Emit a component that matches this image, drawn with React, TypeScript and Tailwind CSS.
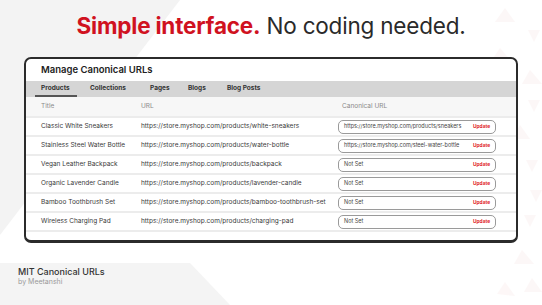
import React from 'react';

const rows = [
  { title: 'Classic White Sneakers', url: 'https://store.myshop.com/products/white-sneakers', canonical: 'https://store.myshop.com/products/sneakers' },
  { title: 'Stainless Steel Water Bottle', url: 'https://store.myshop.com/products/water-bottle', canonical: 'https://store.myshop.com/steel-water-bottle' },
  { title: 'Vegan Leather Backpack', url: 'https://store.myshop.com/products/backpack', canonical: '' },
  { title: 'Organic Lavender Candle', url: 'https://store.myshop.com/products/lavender-candle', canonical: '' },
  { title: 'Bamboo Toothbrush Set', url: 'https://store.myshop.com/products/bamboo-toothbrush-set', canonical: '' },
  { title: 'Wireless Charging Pad', url: 'https://store.myshop.com/products/charging-pad', canonical: '' },
];

const tabs = [
  { label: 'Products', w: 'w-[49px]', active: true },
  { label: 'Collections', w: 'w-[60px]', active: false },
  { label: 'Pages', w: 'w-[38px]', active: false },
  { label: 'Blogs', w: 'w-[39px]', active: false },
  { label: 'Blog Posts', w: 'w-[60px]', active: false },
];

const Backdrop = () => (
  <svg className="absolute inset-0" width="542" height="305" viewBox="0 0 542 305">
    <rect width="542" height="305" fill="#ffffff" />
    <polygon points="0,0 180,0 0,235" fill="#f3f3f3" />
    <polygon points="0,263 190,263 230,305 0,305" fill="#f4f4f4" />
    {/* faint triangle pattern on the right */}
    <g fill="#eec4c4" opacity="0.13">
      <polygon points="505,8 515,22 495,22" />
      <polygon points="528,30 540,30 534,42" />
      <polygon points="500,48 512,62 492,60" />
      <polygon points="530,70 542,84 522,84" />
      <polygon points="522,250 534,264 514,264" />
      <polygon points="532,278 542,292 524,292" />
      <polygon points="505,282 515,296 497,294" />
      <polygon points="528,100 540,100 534,112" />
      <polygon points="526,160 538,160 532,172" />
      <polygon points="524,215 536,215 530,227" />
      <polygon points="520,125 530,139 512,139" />
      <polygon points="530,190 542,190 536,202" />
    </g>
  </svg>
);

export default function App() {
  return (
    <div className="relative w-[542px] h-[305px] overflow-hidden font-['Inter',sans-serif]">
      <Backdrop />
      <div className="relative flex flex-col">
        <h1 className="h-[57px] pt-[11px] text-center text-[22.5px] leading-[30px] tracking-[-0.2px] text-[#2a2a2a]">
          <span className="font-bold text-[#d0121f]">Simple interface.</span>{' '}
          <span className="font-normal">No coding needed.</span>
        </h1>

        <div className="mx-[24px] h-[186px] rounded-[7px] border-2 border-b-[3px] border-[#2b2b2b] bg-white overflow-hidden flex flex-col">
          <div className="h-[22px] pl-[15px] flex items-center text-[9.5px] font-semibold text-[#222]">
            Manage Canonical URLs
          </div>

          <div className="h-[16px] bg-[#d5d5d5] pl-[9px] flex">
            {tabs.map((t) => (
              <div key={t.label} className={`${t.w} relative pl-[6px] flex items-center text-[6.5px] font-bold text-[#333]`}>
                {t.label}
                {t.active && <div className="absolute bottom-0 left-0 w-[42px] h-[2px] bg-[#555]" />}
              </div>
            ))}
          </div>

          <div className="h-[19px] bg-[#f7f7f7] pl-[15px] flex items-center text-[6.5px] text-[#8a8a8a]">
            <div className="w-[100px]">Title</div>
            <div className="w-[197px]">URL</div>
            <div className="pl-[4px]">Canonical URL</div>
          </div>

          {rows.map((r) => (
            <div key={r.title} className="h-[19px] border-t-2 border-[#ececec] pl-[15px] flex items-center text-[6.5px] text-[#3a3a3a]">
              <div className="w-[100px]">{r.title}</div>
              <div className="w-[197px]">{r.url}</div>
              <div className="w-[158px] h-[14px] rounded-[5px] border border-[#9a9a9a] flex items-center justify-between pl-[5px] pr-[5px]">
                <span className="text-[5.5px] text-[#444]">{r.canonical || 'Not Set'}</span>
                <span className="text-[4.8px] font-bold text-[#e0232b]">Update</span>
              </div>
            </div>
          ))}
          <div className="border-t-2 border-[#ececec]" />
        </div>

        <div className="pt-[24px] pl-[18px] flex flex-col">
          <span className="text-[9px] leading-[10px] font-medium text-[#333]">MIT Canonical URLs</span>
          <span className="text-[7px] leading-[9px] text-[#9a9a9a]">by Meetanshi</span>
        </div>
      </div>
    </div>
  );
}
